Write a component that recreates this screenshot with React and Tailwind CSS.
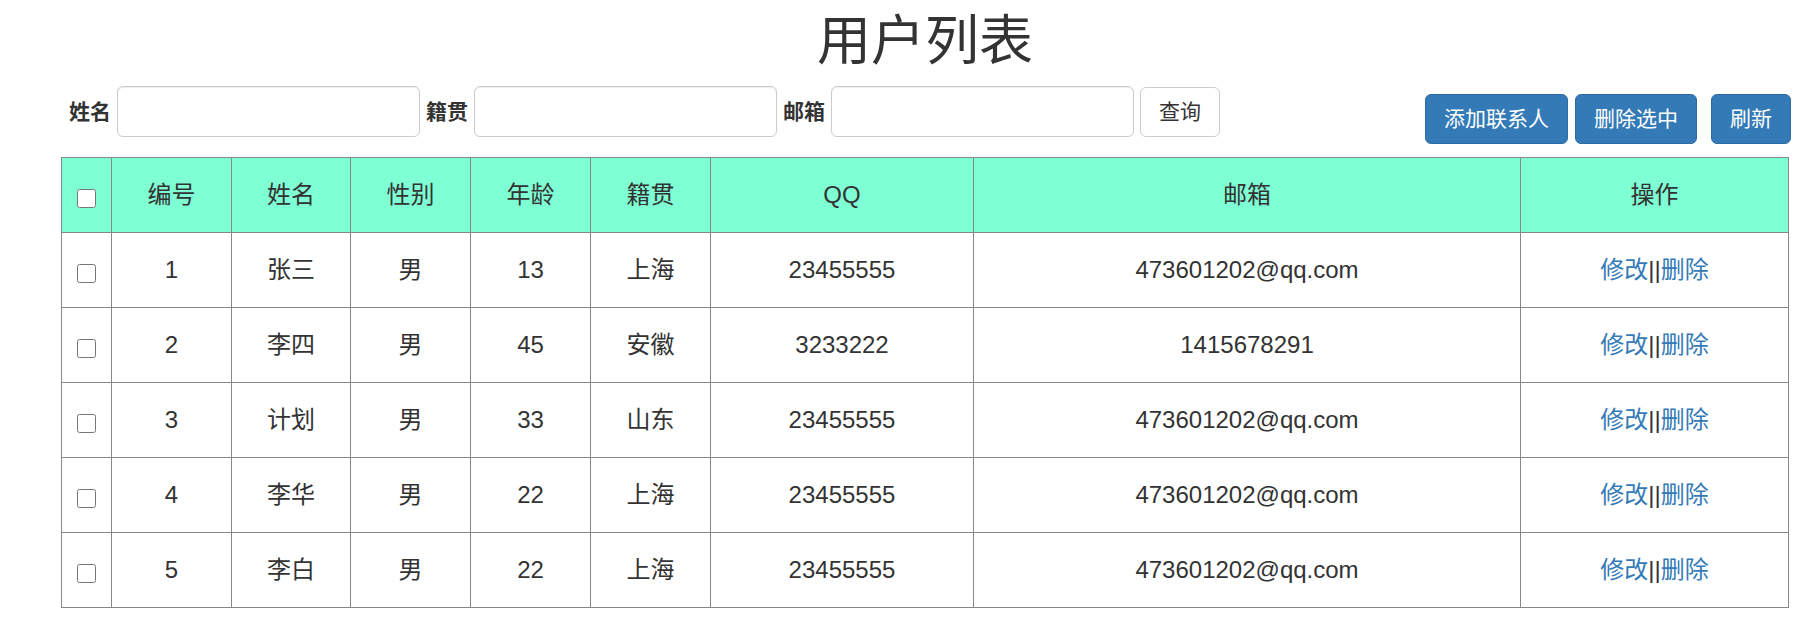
import React from "react"

const users = [
  { id: 1, name: "张三", gender: "男", age: 13, address: "上海", qq: "23455555", email: "473601202@qq.com" },
  { id: 2, name: "李四", gender: "男", age: 45, address: "安徽", qq: "3233222", email: "1415678291" },
  { id: 3, name: "计划", gender: "男", age: 33, address: "山东", qq: "23455555", email: "473601202@qq.com" },
  { id: 4, name: "李华", gender: "男", age: 22, address: "上海", qq: "23455555", email: "473601202@qq.com" },
  { id: 5, name: "李白", gender: "男", age: 22, address: "上海", qq: "23455555", email: "473601202@qq.com" },
]

const font = { fontFamily: '"Liberation Sans", "Noto Sans CJK SC", sans-serif' }

function Field({ label }) {
  return (
    <>
      <label className="text-[21px] leading-[30px] font-bold text-[#333]">{label}</label>
      <input
        type="text"
        className="w-[303px] h-[51px] px-[18px] border border-[#ccc] rounded-[6px] bg-white shadow-[inset_0_1px_1px_rgba(0,0,0,0.075)] outline-none"
      />
    </>
  )
}

function Btn({ children }) {
  return (
    <button className="px-[18px] py-[9px] text-[21px] leading-[30px] text-white bg-[#337ab7] border border-[#2e6da4] rounded-[6px]">
      {children}
    </button>
  )
}

export default function App() {
  const th = "border border-[#888] font-normal text-center align-middle"
  const td = "border border-[#888] text-center align-middle"

  return (
    <div className="bg-white min-h-[639px] text-[#333] pl-[61px]" style={font}>
      <div className="w-[1728px]">

        {/* TITLE */}
        <h1 className="mt-[14px] text-center text-[54px] leading-[54px] font-normal">用户列表</h1>

        {/* TOOLBAR */}
        <div className="mt-[18px] w-[1730px] flex justify-between items-start">
          <div className="pl-[8px] flex items-center gap-[6px]">
            <Field label="姓名" />
            <Field label="籍贯" />
            <Field label="邮箱" />
            <button className="px-[18px] py-[9px] text-[21px] leading-[30px] text-[#333] bg-white border border-[#ccc] rounded-[6px]">
              查询
            </button>
          </div>

          <div className="mt-[8px] flex">
            <Btn>添加联系人</Btn>
            <div className="ml-[7px]">
              <Btn>删除选中</Btn>
            </div>
            <div className="ml-[14px]">
              <Btn>刷新</Btn>
            </div>
          </div>
        </div>

        {/* TABLE */}
        <table className="mt-[13px] w-[1728px] table-fixed border-collapse text-[24px] leading-[34px]">
          <thead>
            <tr className="h-[75px] bg-[#7fffd4]">
              <th className={th + " w-[50px]"}>
                <input type="checkbox" className="block mx-auto mt-[6px] w-[19px] h-[19px]" />
              </th>
              <th className={th + " w-[120px]"}>编号</th>
              <th className={th + " w-[119px]"}>姓名</th>
              <th className={th + " w-[120px]"}>性别</th>
              <th className={th + " w-[120px]"}>年龄</th>
              <th className={th + " w-[120px]"}>籍贯</th>
              <th className={th + " w-[263px]"}>QQ</th>
              <th className={th + " w-[547px]"}>邮箱</th>
              <th className={th}>操作</th>
            </tr>
          </thead>
          <tbody>
            {users.map((u) => (
              <tr key={u.id} className="h-[75px]">
                <td className={td}>
                  <input type="checkbox" className="block mx-auto mt-[6px] w-[19px] h-[19px]" />
                </td>
                <td className={td}>{u.id}</td>
                <td className={td}>{u.name}</td>
                <td className={td}>{u.gender}</td>
                <td className={td}>{u.age}</td>
                <td className={td}>{u.address}</td>
                <td className={td}>{u.qq}</td>
                <td className={td}>{u.email}</td>
                <td className={td}>
                  <a href="#" className="text-[#337ab7]">修改</a>
                  ||
                  <a href="#" className="text-[#337ab7]">删除</a>
                </td>
              </tr>
            ))}
          </tbody>
        </table>
      </div>
    </div>
  )
}
